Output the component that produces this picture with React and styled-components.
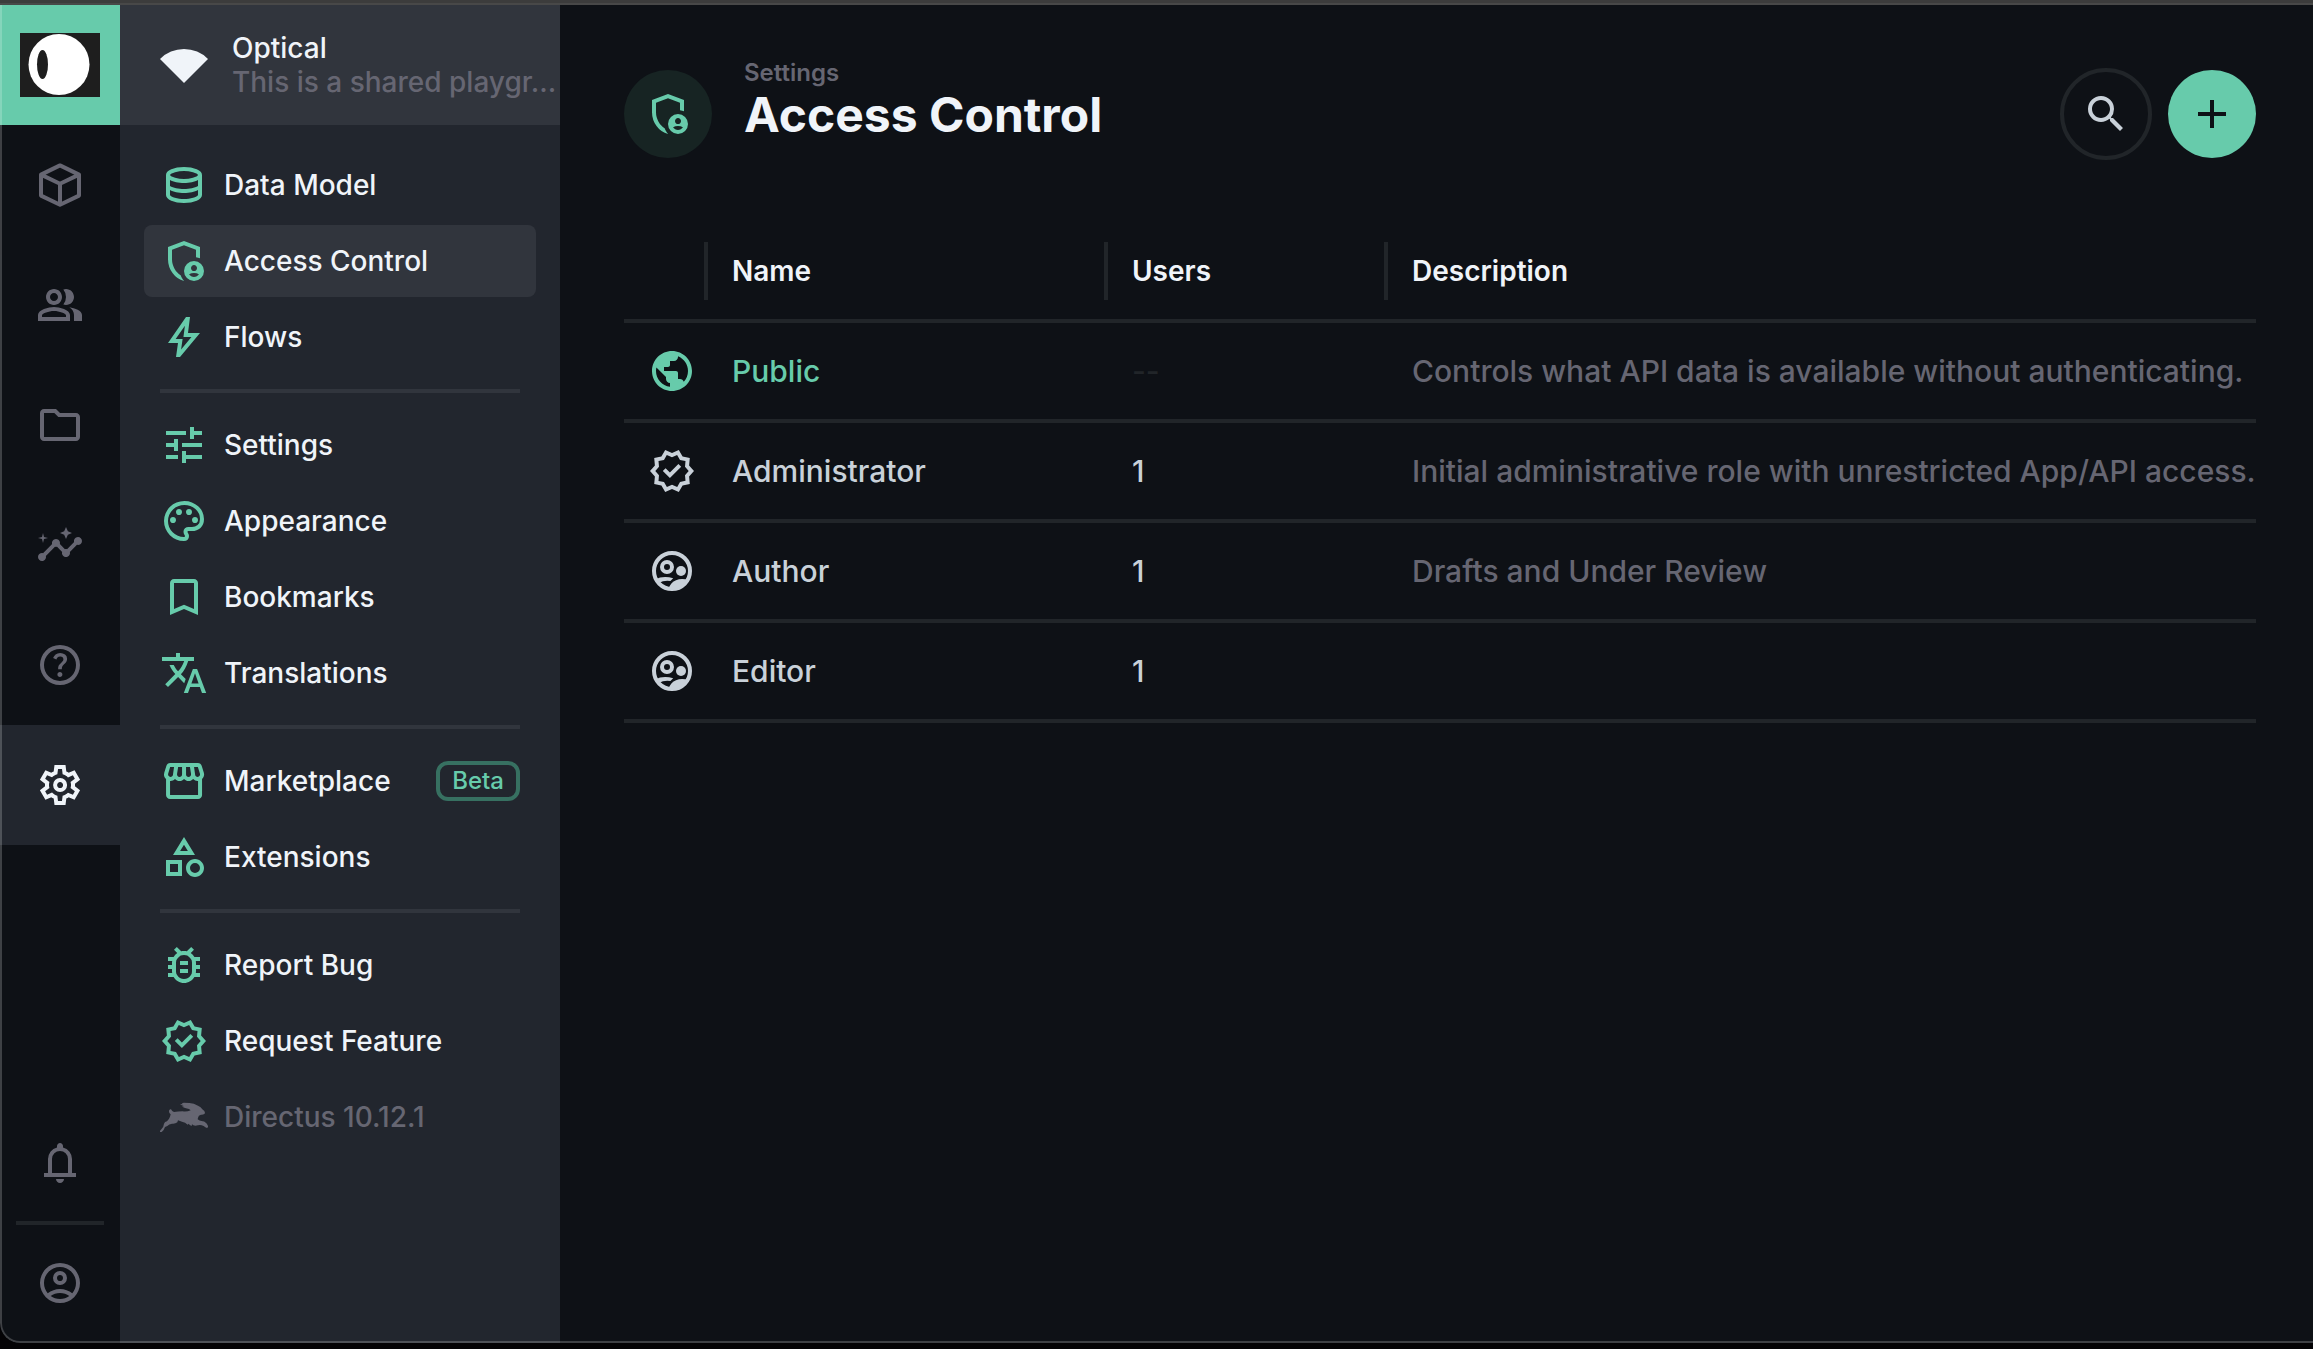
import styled, { createGlobalStyle } from 'styled-components'
import {
    MdAdd,
    MdBookmarkBorder,
    MdInsights,
    MdOutlineBugReport,
    MdOutlineCategory,
    MdOutlineFolder,
    MdOutlinePeopleAlt,
    MdPublic,
    MdSearch,
    MdTune
} from 'react-icons/md'

const green = '#67cbab'
const subdued = '#666672'
const dark = '#0e1116'
const panel = '#22262e'
const raised = '#31353d'
const bright = '#f0f4f9'
const line = '#212529'

const GlobalStyle = createGlobalStyle`
    * { box-sizing: border-box; }
    body {
        margin: 0;
        background: #040305;
        color: #c9d1d9;
        font-family: Inter, "Liberation Sans", sans-serif;
        font-size: 28px;
        font-weight: 500;
    }
    a { color: inherit; text-decoration: none; }
    svg { display: block; flex-shrink: 0; }
`

const TopEdge = styled.div`
    height: 5px;
    background: #3c3c3c;
    border-bottom: 2px solid #484848;
`
const Window = styled.div`
    position: relative;
    display: flex;
    min-height: calc(100vh - 11px);
    background: ${dark};
    border-bottom-left-radius: 20px;
    overflow: hidden;

    &::after {
        content: "";
        position: absolute;
        inset: 0;
        border: solid rgba(255, 255, 255, 0.2);
        border-width: 0 0 2px 2px;
        border-bottom-left-radius: 20px;
        pointer-events: none;
    }
`
const Rail = styled.nav`
    display: flex;
    flex-direction: column;
    flex: 0 0 120px;
`
const RailLink = styled.a`
    display: flex;
    align-items: center;
    justify-content: center;
    height: 120px;
    color: ${props => props.$active ? bright : subdued};
    background: ${props => props.$active ? panel : 'transparent'};
`
const LogoLink = styled(RailLink)`
    background: ${green};
`
const RailFooter = styled.div`
    margin-top: auto;
`
const RailDivider = styled.hr`
    height: 4px;
    margin: -2px 16px;
    border: 0;
    background: ${line};
`
const Sidebar = styled.aside`
    flex: 0 0 440px;
    min-width: 0;
    background: ${panel};
`
const Project = styled.div`
    display: flex;
    align-items: center;
    gap: 24px;
    height: 120px;
    padding-left: 40px;
    background: ${raised};
    color: ${bright};
`
const ProjectText = styled.div`
    line-height: 34px;
    white-space: nowrap;
`
const ProjectNote = styled.div`
    color: ${subdued};
`
const Menu = styled.nav`
    display: flex;
    flex-direction: column;
    gap: 4px;
    padding: 24px;
`
const MenuLink = styled.a`
    display: flex;
    align-items: center;
    gap: 16px;
    height: 72px;
    padding: 0 16px;
    border-radius: 8px;
    color: ${props => props.$muted ? subdued : bright};
    background: ${props => props.$active ? raised : 'transparent'};

    svg { color: ${props => props.$muted ? subdued : green}; }
`
const MenuDivider = styled.hr`
    height: 4px;
    width: calc(100% - 32px);
    margin: 12px 16px;
    border: 0;
    background: ${raised};
`
const Chip = styled.span`
    margin-left: auto;
    padding: 0 12px;
    border: 4px solid #377061;
    border-radius: 12px;
    color: ${green};
    font-size: 24px;
    line-height: 32px;
`
const Main = styled.main`
    flex: 1;
    min-width: 0;
    padding: 55px 57px 64px 64px;
`
const Header = styled.header`
    display: flex;
    align-items: center;
    gap: 32px;
    height: 108px;
    margin-bottom: 55px;
`
const HeaderIcon = styled.div`
    display: flex;
    align-items: center;
    justify-content: center;
    width: 88px;
    height: 88px;
    border-radius: 50%;
    background: #172423;
    color: ${green};
`
const Titles = styled.div`
    align-self: flex-start;
`
const Crumb = styled.a`
    display: block;
    color: ${subdued};
    font-size: 24px;
    font-weight: 600;
    line-height: 26px;
`
const Title = styled.h1`
    margin: 0;
    color: ${bright};
    font-size: 48px;
    font-weight: 700;
    line-height: 58px;
`
const Actions = styled.div`
    display: flex;
    align-items: center;
    gap: 16px;
    margin-left: auto;
`
const RoundButton = styled.button`
    display: flex;
    align-items: center;
    justify-content: center;
    width: ${props => props.$primary ? 88 : 92}px;
    height: ${props => props.$primary ? 88 : 92}px;
    padding: 0;
    border: ${props => props.$primary ? '0' : `4px solid ${line}`};
    border-radius: 50%;
    background: ${props => props.$primary ? green : 'transparent'};
    color: ${props => props.$primary ? dark : '#c9d1d9'};
    cursor: pointer;
`
const Table = styled.table`
    width: 100%;
    table-layout: fixed;
    border-spacing: 0;
    font-size: 30px;
    line-height: 40px;
    white-space: nowrap;
`
const Column = styled.col`
    width: ${props => props.$width};
`
const Th = styled.th`
    height: 100px;
    padding: 0;
    border-bottom: 4px solid ${line};
    color: ${bright};
    font-size: 28px;
    font-weight: 600;
    text-align: left;
`
const ThLabel = styled.div`
    height: 58px;
    padding-left: 24px;
    border-right: ${props => props.$last ? '0' : `4px solid ${line}`};
    line-height: 58px;
`
const Td = styled.td`
    height: 100px;
    padding: 0 0 0 24px;
    border-bottom: 4px solid ${line};
    color: ${props => props.$color || 'inherit'};
`

// Outlined symbols on the 960 grid
const symbols = {
    wifi: 'M480-120 0-600q96-98 220-149t260-51q137 0 261 51t219 149L480-120Z',
    help: 'M478-240q21 0 35.5-14.5T528-290q0-21-14.5-35.5T478-340q-21 0-35.5 14.5T428-290q0 21 14.5 35.5T478-240Zm-36-154h74q0-33 7.5-52t42.5-52q26-26 41-49.5t15-56.5q0-56-41-86t-97-30q-57 0-92.5 30T342-618l66 26q5-18 22.5-39t53.5-21q32 0 48 17.5t16 38.5q0 20-12 37.5T506-526q-44 39-54 59t-10 73Zm38 314q-83 0-156-31.5T197-197q-54-54-85.5-127T80-480q0-83 31.5-156T197-763q54-54 127-85.5T480-880q83 0 156 31.5T763-763q54 54 85.5 127T880-480q0 83-31.5 156T763-197q-54 54-127 85.5T480-80Zm0-80q134 0 227-93t93-227q0-134-93-227t-227-93q-134 0-227 93t-93 227q0 134 93 227t227 93Z',
    settings: 'm370-80-16-128q-13-5-24.5-12T307-235l-119 50L78-375l103-78q-1-7-1-13.5v-27q0-6.5 1-13.5L78-585l110-190 119 50q11-8 23-15t24-12l16-128h220l16 128q13 5 24.5 12t22.5 15l119-50 110 190-103 78q1 7 1 13.5v27q0 6.5-2 13.5l103 78-110 190-118-50q-11 8-23 15t-24 12L590-80H370Zm70-80h79l14-106q31-8 57.5-23.5T639-327l99 41 39-68-86-65q5-14 7-29.5t2-31.5q0-16-2-31.5t-7-29.5l86-65-39-68-99 42q-22-23-48.5-38.5T533-694l-13-106h-79l-14 106q-31 8-57.5 23.5T321-633l-99-41-39 68 86 64q-5 15-7 30t-2 32q0 16 2 31t7 30l-86 65 39 68 99-42q22 23 48.5 38.5T427-266l13 106Zm42-180q58 0 99-41t41-99q0-58-41-99t-99-41q-59 0-99.5 41T342-480q0 58 40.5 99t99.5 41Zm0-80q-25 0-42.5-17.5T422-480q0-25 17.5-42.5T482-540q25 0 42.5 17.5T542-480q0 25-17.5 42.5T482-420Z',
    bell: 'M160-200v-80h80v-280q0-83 50-147.5T420-792v-28q0-25 17.5-42.5T480-880q25 0 42.5 17.5T540-820v28q80 20 130 84.5T720-560v280h80v80H160ZM480-80q-33 0-56.5-23.5T400-160h160q0 33-23.5 56.5T480-80ZM320-280h320v-280q0-66-47-113t-113-47q-66 0-113 47t-47 113v280Z',
    account: 'M234-276q51-39 114-61.5T480-360q69 0 132 22.5T726-276q35-41 54.5-93T800-480q0-133-93.5-226.5T480-800q-133 0-226.5 93.5T160-480q0 59 19.5 111t54.5 93Zm246-164q-59 0-99.5-40.5T340-580q0-59 40.5-99.5T480-720q59 0 99.5 40.5T620-580q0 59-40.5 99.5T480-440Zm0 360q-83 0-156-31.5T197-197q-54-54-85.5-127T80-480q0-83 31.5-156T197-763q54-54 127-85.5T480-880q83 0 156 31.5T763-763q54 54 85.5 127T880-480q0 83-31.5 156T763-197q-54 54-127 85.5T480-80Zm0-80q53 0 100-15.5t86-44.5q-39-29-86-44.5T480-280q-53 0-100 15.5T294-220q39 29 86 44.5T480-160Zm0-360q26 0 43-17t17-43q0-26-17-43t-43-17q-26 0-43 17t-17 43q0 26 17 43t43 17Z',
    database: 'M480-120q-151 0-255.5-46.5T120-280v-400q0-66 105.5-113T480-840q149 0 254.5 47T840-680v400q0 67-104.5 113.5T480-120Zm0-479q89 0 179-25.5T760-679q-11-29-100.5-55T480-760q-91 0-178.5 25.5T200-679q14 30 101.5 55T480-599Zm0 199q42 0 81-4t74.5-11.5q35.5-7.5 67-18.5t57.5-25v-120q-26 14-57.5 25t-67 18.5Q600-528 561-524t-81 4q-42 0-82-4t-75.5-11.5Q287-543 256-554t-56-25v120q25 14 56 25t66.5 18.5Q358-408 398-404t82 4Zm0 200q46 0 93.5-7t87.5-18.5q40-11.5 67-26t32-29.5v-98q-26 14-57.5 25t-67 18.5Q600-328 561-324t-81 4q-42 0-82-4t-75.5-11.5Q287-343 256-354t-56-25v99q5 15 31.5 29t66.5 25.5q40 11.5 88 18.5t94 7Z',
    shield: 'M680-280q25 0 42.5-17.5T740-340q0-25-17.5-42.5T680-400q-25 0-42.5 17.5T620-340q0 25 17.5 42.5T680-280Zm0 120q31 0 57-14.5t42-38.5q-22-13-47-20t-52-7q-27 0-52 7t-47 20q16 24 42 38.5t57 14.5ZM480-80q-139-35-229.5-159.5T160-516v-244l320-120 320 120v227q-19-8-39-14.5t-41-9.5v-147l-240-90-240 90v188q0 47 12.5 94t35 89.5Q310-290 342-254t71 60q11 32 29 61t41 52q-1 0-1.5.5t-1.5.5Zm200 0q-83 0-141.5-58.5T480-280q0-83 58.5-141.5T680-480q83 0 141.5 58.5T880-280q0 83-58.5 141.5T680-80Z',
    bolt: 'm422-232 207-248H469l29-227-185 267h139l-30 208ZM320-80l40-280H160l360-520h80l-40 320h240L400-80h-80Z',
    palette: 'M480-80q-82 0-155-31.5t-127.5-86Q143-252 111.5-325T80-480q0-83 32.5-156t88-127Q256-817 330-848.5T488-880q80 0 151 27.5t124.5 76q53.5 48.5 85 115T880-518q0 115-70 176.5T640-280h-74q-9 0-12.5 5t-3.5 11q0 12 15 34.5t15 51.5q0 50-27.5 74T480-80ZM260-440q26 0 43-17t17-43q0-26-17-43t-43-17q-26 0-43 17t-17 43q0 26 17 43t43 17Zm120-160q26 0 43-17t17-43q0-26-17-43t-43-17q-26 0-43 17t-17 43q0 26 17 43t43 17Zm200 0q26 0 43-17t17-43q0-26-17-43t-43-17q-26 0-43 17t-17 43q0 26 17 43t43 17Zm120 160q26 0 43-17t17-43q0-26-17-43t-43-17q-26 0-43 17t-17 43q0 26 17 43t43 17ZM480-160q9 0 14.5-5t5.5-13q0-14-15-33t-15-57q0-42 29-67t71-25h70q66 0 113-38.5T800-518q0-121-92.5-201.5T488-800q-136 0-232 93t-96 227q0 133 93.5 226.5T480-160Z',
    translate: 'm476-80 182-480h84L924-80h-84l-43-122H603L560-80h-84ZM160-200l-56-56 202-202q-35-35-63.5-80T190-640h84q20 39 40 68t48 58q33-33 68.5-92.5T484-720H40v-80h280v-80h80v80h280v80H564q-21 72-63 148t-83 116l96 98-30 82-122-125-202 201Zm468-72h144l-72-204-72 204Z',
    store: 'M841-518v318q0 33-23.5 56.5T761-120H201q-33 0-56.5-23.5T121-200v-318q-23-21-35.5-54t-.5-72l42-136q8-26 28.5-43t47.5-17h556q27 0 47 16.5t29 43.5l42 136q12 39-.5 71T841-518Zm-272-42q27 0 41-18.5t11-41.5l-22-140h-78v148q0 21 14 36.5t34 15.5Zm-180 0q23 0 37.5-15.5T441-612v-148h-78l-22 140q-4 24 10.5 42t37.5 18Zm-178 0q18 0 31.5-13t16.5-33l22-154h-78l-40 134q-6 20 6.5 43t41.5 23Zm540 0q29 0 42-23t6-43l-42-134h-76l22 154q3 20 16.5 33t31.5 13ZM201-200h560v-282q-5 2-6.5 2H751q-27 0-47.5-9T663-518q-18 18-41 28t-49 10q-27 0-50.5-10T481-518q-17 18-39.5 28T393-480q-29 0-52.5-10T299-518q-21 21-41.5 29.5T211-480h-4.5q-2.5 0-5.5-2v282Z',
    verified: 'm344-60-76-128-144-32 14-148-98-112 98-112-14-148 144-32 76-128 136 58 136-58 76 128 144 32-14 148 98 112-98 112 14 148-144 32-76 128-136-58-136 58Zm34-102 102-44 104 44 56-96 110-26-10-112 74-84-74-86 10-112-110-24-58-96-102 44-104-44-56 96-110 24 10 112-74 86 74 84-10 114 110 24 58 96Zm60-176 226-226-56-58-170 170-86-84-56 56 142 142Z'
}

function Symbol({ name }){
    return(
        <svg width="48" height="48" viewBox="0 -960 960 960" fill="currentColor" aria-hidden="true">
            <path d={symbols[name]} />
        </svg>
    )
}

function Box(){
    return(
        <svg width="48" height="48" viewBox="0 0 24 24" fill="none" stroke="currentColor" strokeWidth="2" strokeLinejoin="round" aria-hidden="true">
            <path d="M12 2.2l9.5 4.6v10.5L12 21.9l-9.5-4.6V6.8zM2.5 6.8l9.5 4.6 9.5-4.6M12 11.4v10.5" />
        </svg>
    )
}

function Rabbit(){
    return(
        <svg width="48" height="48" viewBox="24 9 144 144" fill="currentColor" aria-hidden="true">
            <path d="M84 42L92 43Q87 38 96 38L112 39Q126 39 138 47Q147 50 151 58Q160 64 159 70Q156 75 147 74Q139 76 138 83L137 88Q141 93 152 94Q161 95 167 106Q170 112 165 114Q160 113 155 108Q146 104 138 106Q125 109 120 103L119 108Q112 105 110 101L107 104Q100 97 90 95L78 91L76 97Q70 102 60 101Q51 102 46 108L39 111Q36 121 29 126L24 126Q23 122 28 118Q35 112 36 101Q38 95 45 94Q51 88 54 80L56 73Q50 69 51 62Q53 56 57 58Q60 64 66 66Q78 64 92 64Q104 66 116 61Q113 56 102 55Q94 54 90 49L97 49Q88 46 84 42Z" />
        </svg>
    )
}

function UserCircle(){
    return(
        <svg width="48" height="48" viewBox="0 0 24 24" fill="currentColor" aria-hidden="true">
            <circle cx="12" cy="12" r="9" fill="none" stroke="currentColor" strokeWidth="2" />
            <circle cx="9.5" cy="10" r="2.5" fill="none" stroke="currentColor" strokeWidth="2" />
            <circle cx="16.5" cy="12" r="2.5" />
            <path d="M10.4 20.4Q11.4 17.8 14 16.6Q16.8 15.4 20.6 16.6Q17.4 22.4 10.4 20.4Z" />
            <path d="M3.6 16.2Q7.6 14.1 12.6 15.6L11.2 17Q8 16.5 5.4 18Z" />
        </svg>
    )
}

function Logo(){
    return(
        <svg width="80" height="64" viewBox="0 0 80 64" role="img" aria-label="Optical">
            <rect width="80" height="64" fill="#1e1e1e" />
            <circle cx="39" cy="31.5" r="30.5" fill="#fff" />
            <ellipse cx="22.5" cy="31.5" rx="5.5" ry="14.5" fill="#1e1e1e" />
        </svg>
    )
}

const modules = [
    { label: 'Content', icon: <Box /> },
    { label: 'User Directory', icon: <MdOutlinePeopleAlt size={48} /> },
    { label: 'File Library', icon: <MdOutlineFolder size={48} /> },
    { label: 'Insights', icon: <MdInsights size={48} /> },
    { label: 'Documentation', icon: <Symbol name="help" /> },
    { label: 'Settings', icon: <Symbol name="settings" />, active: true }
]

const menu = [
    { label: 'Data Model', icon: <Symbol name="database" /> },
    { label: 'Access Control', icon: <Symbol name="shield" />, active: true },
    { label: 'Flows', icon: <Symbol name="bolt" /> },
    { divider: true },
    { label: 'Settings', icon: <MdTune size={48} /> },
    { label: 'Appearance', icon: <Symbol name="palette" /> },
    { label: 'Bookmarks', icon: <MdBookmarkBorder size={48} /> },
    { label: 'Translations', icon: <Symbol name="translate" /> },
    { divider: true },
    { label: 'Marketplace', icon: <Symbol name="store" />, chip: 'Beta' },
    { label: 'Extensions', icon: <MdOutlineCategory size={48} /> },
    { divider: true },
    { label: 'Report Bug', icon: <MdOutlineBugReport size={48} /> },
    { label: 'Request Feature', icon: <Symbol name="verified" /> },
    { label: 'Directus 10.12.1', icon: <Rabbit />, muted: true }
]

const roles = [
    { name: 'Public', icon: <MdPublic size={48} />, users: '--', description: 'Controls what API data is available without authenticating.', isPublic: true },
    { name: 'Administrator', icon: <Symbol name="verified" />, users: '1', description: 'Initial administrative role with unrestricted App/API access.' },
    { name: 'Author', icon: <UserCircle />, users: '1', description: 'Drafts and Under Review' },
    { name: 'Editor', icon: <UserCircle />, users: '1', description: '' }
]

export default function App(){
    return(
        <>
            <GlobalStyle />
            <TopEdge />
            <Window>
                <Rail>
                    <LogoLink href="#"><Logo /></LogoLink>
                    {modules.map(item => (
                        <RailLink key={item.label} href="#" aria-label={item.label} $active={item.active}>{item.icon}</RailLink>
                    ))}
                    <RailFooter>
                        <RailLink href="#" aria-label="Notifications"><Symbol name="bell" /></RailLink>
                        <RailDivider />
                        <RailLink href="#" aria-label="Account"><Symbol name="account" /></RailLink>
                    </RailFooter>
                </Rail>
                <Sidebar>
                    <Project>
                        <Symbol name="wifi" />
                        <ProjectText>
                            <div>Optical</div>
                            <ProjectNote>This is a shared playgr...</ProjectNote>
                        </ProjectText>
                    </Project>
                    <Menu>
                        {menu.map((item, i) => item.divider ? <MenuDivider key={i} /> : (
                            <MenuLink key={i} href="#" $active={item.active} $muted={item.muted}>
                                {item.icon}
                                {item.label}
                                {item.chip && <Chip>{item.chip}</Chip>}
                            </MenuLink>
                        ))}
                    </Menu>
                </Sidebar>
                <Main>
                    <Header>
                        <HeaderIcon><Symbol name="shield" /></HeaderIcon>
                        <Titles>
                            <Crumb href="#">Settings</Crumb>
                            <Title>Access Control</Title>
                        </Titles>
                        <Actions>
                            <RoundButton aria-label="Search"><MdSearch size={48} /></RoundButton>
                            <RoundButton aria-label="Create Role" $primary><MdAdd size={48} /></RoundButton>
                        </Actions>
                    </Header>
                    <Table>
                        <colgroup>
                            <Column $width="84px" />
                            <Column $width="400px" />
                            <Column $width="280px" />
                            <Column $width="auto" />
                        </colgroup>
                        <thead>
                            <tr>
                                <Th aria-label="Icon"><ThLabel /></Th>
                                <Th><ThLabel>Name</ThLabel></Th>
                                <Th><ThLabel>Users</ThLabel></Th>
                                <Th><ThLabel $last>Description</ThLabel></Th>
                            </tr>
                        </thead>
                        <tbody>
                            {roles.map(role => (
                                <tr key={role.name}>
                                    <Td $color={role.isPublic && green}>{role.icon}</Td>
                                    <Td $color={role.isPublic && green}>{role.name}</Td>
                                    <Td $color={role.isPublic && line}>{role.users}</Td>
                                    <Td $color={subdued}>{role.description}</Td>
                                </tr>
                            ))}
                        </tbody>
                    </Table>
                </Main>
            </Window>
        </>
    )
}
